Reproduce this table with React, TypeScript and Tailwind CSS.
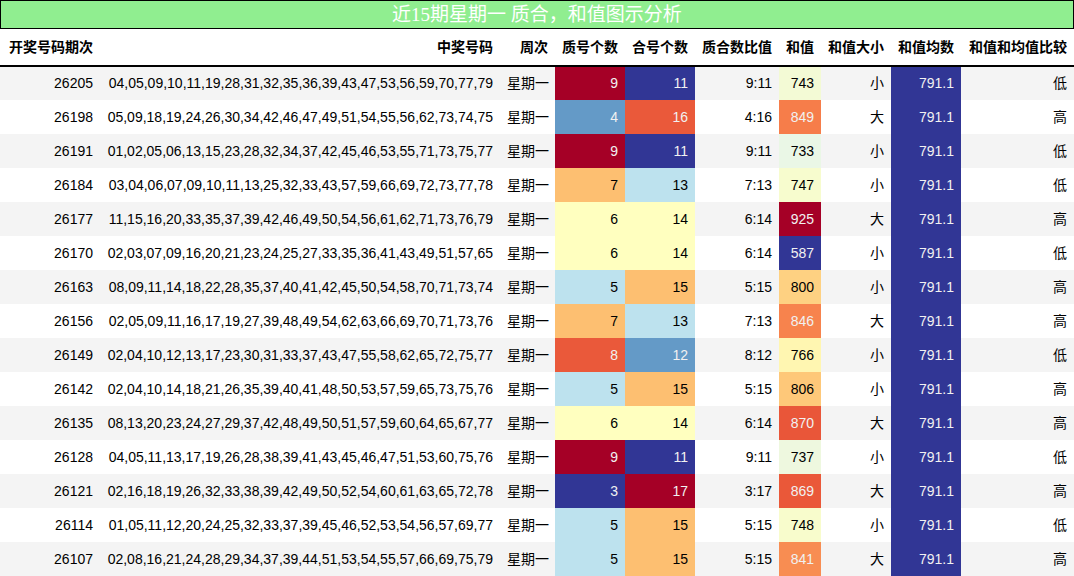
import React from "react";

type Row = {
  issue: string;
  nums: string;
  prime: number;
  composite: number;
  sum: number;
  size: string;
  cmp: string;
};

const rows: Row[] = [
  { issue: "26205", nums: "04,05,09,10,11,19,28,31,32,35,36,39,43,47,53,56,59,70,77,79", prime: 9, composite: 11, sum: 743, size: "小", cmp: "低" },
  { issue: "26198", nums: "05,09,18,19,24,26,30,34,42,46,47,49,51,54,55,56,62,73,74,75", prime: 4, composite: 16, sum: 849, size: "大", cmp: "高" },
  { issue: "26191", nums: "01,02,05,06,13,15,23,28,32,34,37,42,45,46,53,55,71,73,75,77", prime: 9, composite: 11, sum: 733, size: "小", cmp: "低" },
  { issue: "26184", nums: "03,04,06,07,09,10,11,13,25,32,33,43,57,59,66,69,72,73,77,78", prime: 7, composite: 13, sum: 747, size: "小", cmp: "低" },
  { issue: "26177", nums: "11,15,16,20,33,35,37,39,42,46,49,50,54,56,61,62,71,73,76,79", prime: 6, composite: 14, sum: 925, size: "大", cmp: "高" },
  { issue: "26170", nums: "02,03,07,09,16,20,21,23,24,25,27,33,35,36,41,43,49,51,57,65", prime: 6, composite: 14, sum: 587, size: "小", cmp: "低" },
  { issue: "26163", nums: "08,09,11,14,18,22,28,35,37,40,41,42,45,50,54,58,70,71,73,74", prime: 5, composite: 15, sum: 800, size: "小", cmp: "高" },
  { issue: "26156", nums: "02,05,09,11,16,17,19,27,39,48,49,54,62,63,66,69,70,71,73,76", prime: 7, composite: 13, sum: 846, size: "大", cmp: "高" },
  { issue: "26149", nums: "02,04,10,12,13,17,23,30,31,33,37,43,47,55,58,62,65,72,75,77", prime: 8, composite: 12, sum: 766, size: "小", cmp: "低" },
  { issue: "26142", nums: "02,04,10,14,18,21,26,35,39,40,41,48,50,53,57,59,65,73,75,76", prime: 5, composite: 15, sum: 806, size: "小", cmp: "高" },
  { issue: "26135", nums: "08,13,20,23,24,27,29,37,42,48,49,50,51,57,59,60,64,65,67,77", prime: 6, composite: 14, sum: 870, size: "大", cmp: "高" },
  { issue: "26128", nums: "04,05,11,13,17,19,26,28,38,39,41,43,45,46,47,51,53,60,75,76", prime: 9, composite: 11, sum: 737, size: "小", cmp: "低" },
  { issue: "26121", nums: "02,16,18,19,26,32,33,38,39,42,49,50,52,54,60,61,63,65,72,78", prime: 3, composite: 17, sum: 869, size: "大", cmp: "高" },
  { issue: "26114", nums: "01,05,11,12,20,24,25,32,33,37,39,45,46,52,53,54,56,57,69,77", prime: 5, composite: 15, sum: 748, size: "小", cmp: "低" },
  { issue: "26107", nums: "02,08,16,21,24,28,29,34,37,39,44,51,53,54,55,57,66,69,75,79", prime: 5, composite: 15, sum: 841, size: "大", cmp: "高" },
];

// RdYlBu reversed
const stops = [
  [0x31, 0x36, 0x95],
  [0x45, 0x75, 0xb4],
  [0x74, 0xad, 0xd1],
  [0xab, 0xd9, 0xe9],
  [0xe0, 0xf3, 0xf8],
  [0xff, 0xff, 0xbf],
  [0xfe, 0xe0, 0x90],
  [0xfd, 0xae, 0x61],
  [0xf4, 0x6d, 0x43],
  [0xd7, 0x30, 0x27],
  [0xa5, 0x00, 0x26],
];

function gradient(v: number, min: number, max: number) {
  const t = max === min ? 0 : (v - min) / (max - min);
  const pos = t * 10;
  const i = Math.min(9, Math.floor(pos));
  const f = pos - i;
  const c = stops[i].map((a, k) => Math.round(a + (stops[i + 1][k] - a) * f));
  const lin = c.map((x) => {
    const s = x / 255;
    return s <= 0.03928 ? s / 12.92 : Math.pow((s + 0.055) / 1.055, 2.4);
  });
  const lum = 0.2126 * lin[0] + 0.7152 * lin[1] + 0.0722 * lin[2];
  return {
    backgroundColor: `rgb(${c[0]},${c[1]},${c[2]})`,
    color: lum < 0.408 ? "#f1f1f1" : "#000000",
  };
}

const headers = [
  ["开奖号码期次", "w-[100px]"],
  ["中奖号码", "w-[400px]"],
  ["周次", "w-[55px]"],
  ["质号个数", "w-[70px]"],
  ["合号个数", "w-[70px]"],
  ["质合数比值", "w-[84px]"],
  ["和值", "w-[42px]"],
  ["和值大小", "w-[70px]"],
  ["和值均数", "w-[70px]"],
  ["和值和均值比较", "w-[113px]"],
];

const range = (k: (r: Row) => number) => {
  const v = rows.map(k);
  return [Math.min(...v), Math.max(...v)] as const;
};

export default function App() {
  const [pMin, pMax] = range((r) => r.prime);
  const [cMin, cMax] = range((r) => r.composite);
  const [sMin, sMax] = range((r) => r.sum);
  const avg = gradient(791.1, 791.1, 791.1);

  const cell = "px-[7px] text-right whitespace-nowrap";

  return (
    <div
      className="w-[1074px] h-[576px] overflow-hidden bg-white text-black text-[14px]"
      style={{ fontFamily: '"Liberation Sans", "Noto Sans CJK SC", sans-serif' }}
    >
      <div
        className="h-[29px] border border-black bg-[#90ee90] text-white text-[19px] flex items-center justify-center leading-none"
        style={{ fontFamily: '"Liberation Serif", "Noto Sans CJK SC", serif' }}
      >
        近15期星期一 质合，和值图示分析
      </div>
      <table className="table-fixed border-collapse w-[1074px]">
        <colgroup>
          {headers.map(([h, w]) => (
            <col key={h} className={w} />
          ))}
        </colgroup>
        <thead>
          <tr className="h-[37px] border-b-2 border-black">
            {headers.map(([h]) => (
              <th key={h} className={`${cell} font-bold pt-[1px]`}>
                {h}
              </th>
            ))}
          </tr>
        </thead>
        <tbody>
          {rows.map((r, i) => (
            <tr key={r.issue} className={`h-[34px] ${i % 2 === 0 ? "bg-[#f4f4f4]" : "bg-white"}`}>
              <td className={cell}>{r.issue}</td>
              <td className={cell}>{r.nums}</td>
              <td className={cell}>星期一</td>
              <td className={cell} style={gradient(r.prime, pMin, pMax)}>
                {r.prime}
              </td>
              <td className={cell} style={gradient(r.composite, cMin, cMax)}>
                {r.composite}
              </td>
              <td className={cell}>
                {r.prime}:{r.composite}
              </td>
              <td className={cell} style={gradient(r.sum, sMin, sMax)}>
                {r.sum}
              </td>
              <td className={cell}>{r.size}</td>
              <td className={cell} style={avg}>
                791.1
              </td>
              <td className={cell}>{r.cmp}</td>
            </tr>
          ))}
        </tbody>
      </table>
    </div>
  );
}
